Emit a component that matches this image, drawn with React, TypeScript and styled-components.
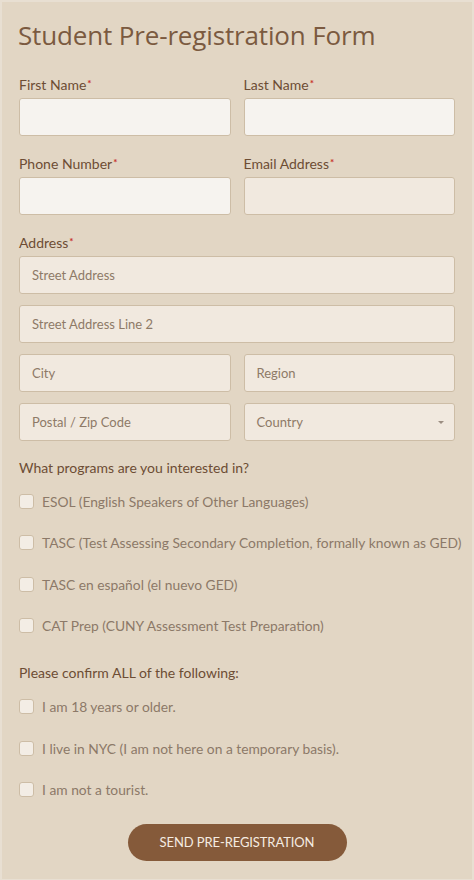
import React from 'react';
import styled, { createGlobalStyle } from 'styled-components';

const GlobalStyle = createGlobalStyle`
  html, body {
    margin: 0;
    padding: 0;
    background: #e2d6c4;
  }
  * {
    box-sizing: border-box;
  }
`;

const Page = styled.form`
  min-height: 880px;
  padding: 18px 19px 20px;
  background: #e2d6c4;
  box-shadow: inset 0 0 0 2px #e8dfd2;
  font-family: Lato, 'Noto Sans', sans-serif;
`;

const Title = styled.h1`
  margin: 0 0 24px -1px;
  font-family: 'Open Sans', sans-serif;
  font-weight: 400;
  font-size: 26px;
  letter-spacing: -0.15px;
  line-height: 34px;
  color: #7b5a40;
`;

const Grid = styled.div`
  display: grid;
  grid-template-columns: 1fr 1fr;
  column-gap: 13px;
  row-gap: 19px;
`;

const Field = styled.div<{ $wide?: boolean }>`
  display: flex;
  flex-direction: column;
  gap: 4px;
  grid-column: ${({ $wide }) => ($wide ? '1 / -1' : 'auto')};
`;

const Label = styled.label`
  display: block;
  height: 18px;
  font-size: 14px;
  line-height: 18px;
  color: #6d4d34;

  & > b {
    position: relative;
    top: -3px;
    margin-left: 1px;
    color: #c8312a;
    font-weight: 700;
    font-size: 10px;
  }
`;

const Input = styled.input<{ $tone?: 'light' | 'warm' }>`
  height: 38px;
  width: 100%;
  border: 1px solid #cdbda6;
  border-radius: 3px;
  padding: 0 12px;
  font-family: inherit;
  font-size: 13px;
  color: #6d4d34;
  background: ${({ $tone }) => ($tone === 'light' ? '#f6f3ef' : '#f1e9df')};
  outline: none;

  &::placeholder {
    color: #8e7a67;
  }
`;

const AddressStack = styled.div`
  display: grid;
  grid-template-columns: 1fr 1fr;
  column-gap: 13px;
  row-gap: 11px;
`;

const FullRow = styled.div`
  grid-column: 1 / -1;
`;

const SelectBox = styled.div`
  position: relative;
  height: 38px;
  border: 1px solid #cdbda6;
  border-radius: 3px;
  background: #f1e9df;
  display: flex;
  align-items: center;
  padding: 0 12px;
  font-size: 13px;
  color: #8e7a67;

  &::after {
    content: '';
    position: absolute;
    right: 10px;
    top: 17px;
    border-left: 3px solid transparent;
    border-right: 3px solid transparent;
    border-top: 3px solid #9b8e82;
  }
`;

const Section = styled.fieldset<{ $top: number }>`
  border: 0;
  padding: 0;
  margin: ${({ $top }) => $top}px 0 0;
  display: flex;
  flex-direction: column;
`;

const Question = styled.legend`
  padding: 0;
  font-size: 14px;
  line-height: 18px;
  color: #6d4d34;
`;

const Options = styled.div<{ $top: number }>`
  display: flex;
  flex-direction: column;
  gap: 21.5px;
  margin-top: ${({ $top }) => $top}px;
`;

const Option = styled.label`
  display: flex;
  align-items: center;
  gap: 8px;
  height: 20px;
  font-size: 13.8px;
  color: #8c7968;
  white-space: nowrap;
`;

const Box = styled.span`
  flex: none;
  width: 15px;
  height: 15px;
  border: 1px solid #cdbda6;
  border-radius: 3px;
  background: #f3ede5;
`;

const Actions = styled.div`
  display: flex;
  justify-content: center;
  margin-top: 24px;
`;

const SubmitButton = styled.button`
  width: 219px;
  height: 37px;
  border: 0;
  border-radius: 19px;
  background: #855a3a;
  color: #f5ece2;
  font-family: Lato, sans-serif;
  font-size: 13px;
  letter-spacing: -0.1px;
`;

const programs = [
  'ESOL (English Speakers of Other Languages)',
  'TASC (Test Assessing Secondary Completion, formally known as GED)',
  'TASC en español (el nuevo GED)',
  'CAT Prep (CUNY Assessment Test Preparation)',
];

const confirmations = [
  'I am 18 years or older.',
  'I live in NYC (I am not here on a temporary basis).',
  'I am not a tourist.',
];

export default function App() {
  return (
    <>
      <GlobalStyle />
      <Page>
        <Title>Student Pre-registration Form</Title>

        <Grid>
          <Field>
            <Label>First Name<b>*</b></Label>
            <Input $tone="light" />
          </Field>
          <Field>
            <Label>Last Name<b>*</b></Label>
            <Input $tone="light" />
          </Field>
          <Field>
            <Label>Phone Number<b>*</b></Label>
            <Input $tone="light" />
          </Field>
          <Field>
            <Label>Email Address<b>*</b></Label>
            <Input $tone="warm" />
          </Field>
          <Field $wide>
            <Label>Address<b>*</b></Label>
            <AddressStack>
              <FullRow>
                <Input placeholder="Street Address" />
              </FullRow>
              <FullRow>
                <Input placeholder="Street Address Line 2" />
              </FullRow>
              <Input placeholder="City" />
              <Input placeholder="Region" />
              <Input placeholder="Postal / Zip Code" />
              <SelectBox>Country</SelectBox>
            </AddressStack>
          </Field>
        </Grid>

        <Section $top={18}>
          <Question>What programs are you interested in?</Question>
          <Options $top={14}>
            {programs.map((p) => (
              <Option key={p}>
                <Box />
                {p}
              </Option>
            ))}
          </Options>
        </Section>

        <Section $top={28}>
          <Question>Please confirm ALL of the following:</Question>
          <Options $top={15}>
            {confirmations.map((c) => (
              <Option key={c}>
                <Box />
                {c}
              </Option>
            ))}
          </Options>
        </Section>

        <Actions>
          <SubmitButton type="button">SEND PRE-REGISTRATION</SubmitButton>
        </Actions>
      </Page>
    </>
  );
}
